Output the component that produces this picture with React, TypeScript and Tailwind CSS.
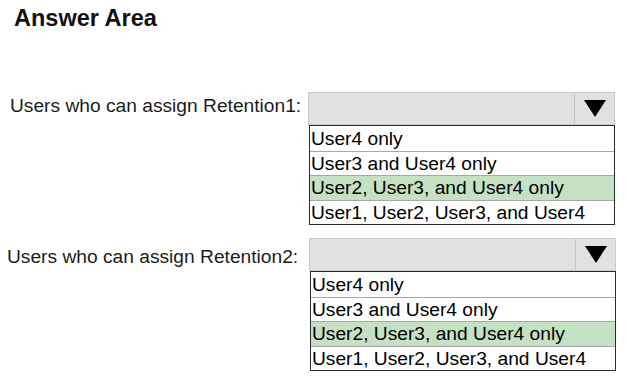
const options = [
  "User4 only",
  "User3 and User4 only",
  "User2, User3, and User4 only",
  "User1, User2, User3, and User4",
];

// 정답 영역 드롭다운 한 줄
const AnswerRow = ({ label, selected, rowClass, labelClass }: { label: string; selected: number; rowClass: string; labelClass: string }) => {
  return (
    <div className={`flex items-start ${rowClass}`}>
      <div className={`h-[33px] flex items-center text-[19.2px] text-[#1c1c1c] whitespace-nowrap ${labelClass}`}>
        {label}
      </div>
      <div className="w-[307px]">
        {/* 드롭다운 헤더 */}
        <div className="flex h-[33px] bg-[#e1e1e1] border border-[#cacaca]">
          <div className="flex-1" />
          <div className="w-[40px] border-l border-[#c2c2c2] flex items-center justify-center">
            <svg width="22" height="17" viewBox="0 0 22 17">
              <polygon points="0,0 22,0 11,17" fill="#000" />
            </svg>
          </div>
        </div>
        {/* 선택지 목록 */}
        <div className="ml-[1px] border border-[#2a2a2a] bg-white">
          {options.map((opt, idx) => (
            <div
              key={idx}
              className={`h-[24.5px] flex items-center pl-[1px] text-[19.2px] leading-none text-black ${idx > 0 ? "border-t border-[#a8a8a8]" : ""} ${idx === selected ? "bg-[#c6e0c4]" : ""}`}
            >
              {opt}
            </div>
          ))}
        </div>
      </div>
    </div>
  );
};

export default function App() {
  return (
    <div className="w-[627px] h-[380px] bg-white overflow-hidden font-['Liberation_Sans',Arial,sans-serif]">
      <h1 className="pl-[14px] pt-[5px] text-[23.5px] leading-[27px] font-bold text-[#111]">Answer Area</h1>

      <AnswerRow
        label="Users who can assign Retention1:"
        selected={2}
        rowClass="mt-[60px] pl-[10px]"
        labelClass="w-[298px] -mt-[2px]"
      />
      <AnswerRow
        label="Users who can assign Retention2:"
        selected={2}
        rowClass="mt-[13px] pl-[7px]"
        labelClass="w-[302px] mt-[3px]"
      />
    </div>
  );
}
